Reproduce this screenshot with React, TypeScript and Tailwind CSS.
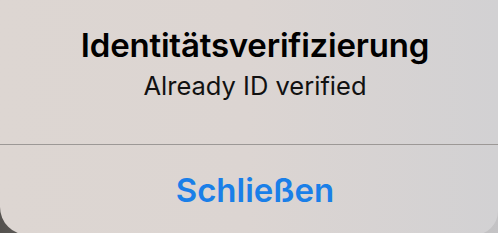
import React from 'react';

export default function App() {
  return (
    <div className="w-[498px] h-[233px] overflow-hidden bg-gradient-to-r from-[#55524f] via-[#a9a6a4] to-[#c4c3c5]">
      <div
        className="h-[235px] rounded-bl-[28px] rounded-br-[24px] bg-gradient-to-r from-[#ddd6d2] via-[#dcd5d2] to-[#d2d1d3] flex flex-col items-center text-center pl-[12px]"
        style={{ fontFamily: 'Inter, "Noto Sans", sans-serif' }}
      >
        <div className="h-[144px] pt-[25px] flex flex-col items-center">
          <h1 className="text-[33px] leading-[40px] font-semibold text-black tracking-[-0.2px]">
            Identitätsverifizierung
          </h1>
          <p className="mt-[6px] text-[25.5px] leading-[30px] text-[#111]">Already ID verified</p>
        </div>
        <div className="h-px w-[calc(100%+12px)] -ml-[12px] bg-[#9c9896]" />
        <button className="pt-[25px] text-[33px] leading-[40px] font-semibold text-[#1a7fe8]">
          Schließen
        </button>
      </div>
    </div>
  );
}
